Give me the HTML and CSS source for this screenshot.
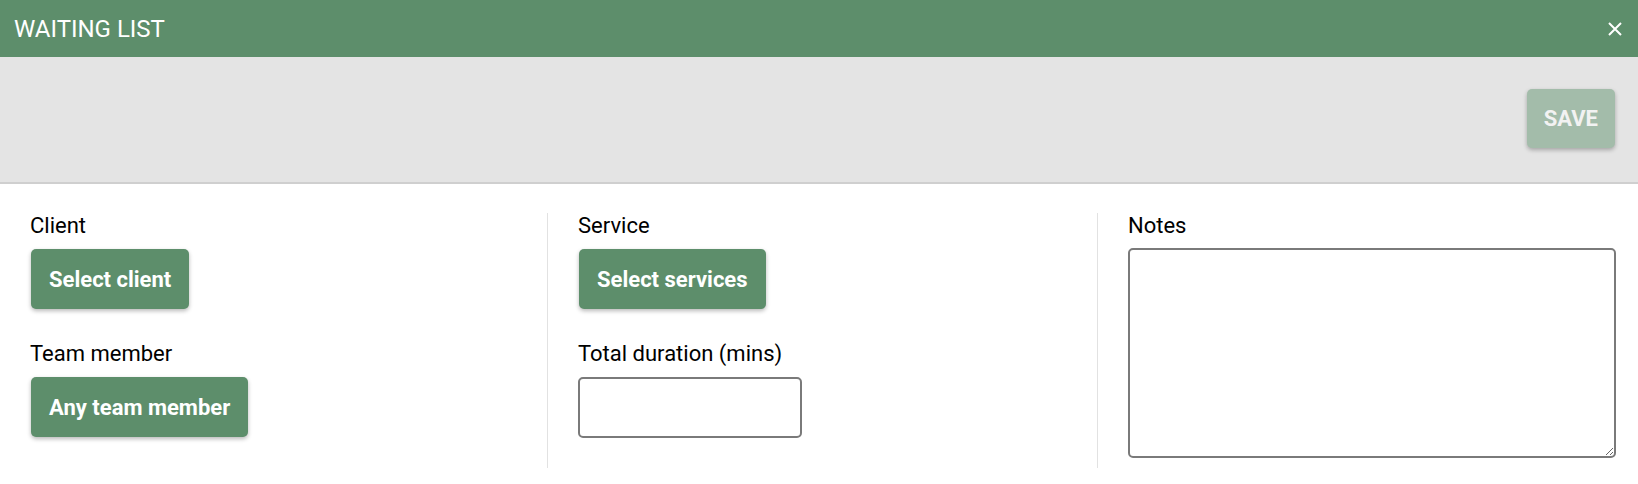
FILE: index.html
```html
<!DOCTYPE html>
<html lang="en">
<head>
<meta charset="utf-8">
<title>Waiting list</title>
<link rel="stylesheet" href="styles.css">
</head>
<body>
<div class="dialog">
  <header class="titlebar">
    <h1 class="title">WAITING LIST</h1>
    <button class="close" aria-label="Close">
      <svg width="14" height="14" viewBox="0 0 14 14"><path d="M1 1 L13 13 M13 1 L1 13" stroke="#fff" stroke-width="2" fill="none"/></svg>
    </button>
  </header>
  <div class="toolbar">
    <button class="btn btn-save" disabled>SAVE</button>
  </div>
  <main class="form">
    <section class="col">
      <div class="field">
        <label class="label">Client</label>
        <button class="btn">Select client</button>
      </div>
      <div class="field">
        <label class="label">Team member</label>
        <button class="btn">Any team member</button>
      </div>
    </section>
    <section class="col col-divided">
      <div class="field">
        <label class="label">Service</label>
        <button class="btn">Select services</button>
      </div>
      <div class="field">
        <label class="label">Total duration (mins)</label>
        <input class="input" type="text">
      </div>
    </section>
    <section class="col col-divided col-last">
      <div class="field field-notes">
        <label class="label">Notes</label>
        <textarea class="notes"></textarea>
      </div>
    </section>
  </main>
</div>
</body>
</html>
```
FILE: styles.css
```css
* { box-sizing: border-box; }
html, body { margin: 0; padding: 0; background: #fff; }
body {
  font-family: Roboto, "Liberation Sans", Arial, sans-serif;
  color: #000;
}
.titlebar {
  height: 57px;
  background: #5d8e6b;
  display: flex;
  align-items: center;
  justify-content: space-between;
  padding: 0 15px 0 14px;
}
.title {
  margin: 0;
  font-size: 24px;
  font-weight: 400;
  color: #fff;
  line-height: 1;
}
.close {
  background: none;
  border: 0;
  padding: 0;
  width: 14px;
  height: 14px;
  display: flex;
  margin-right: 1px;
}
.toolbar {
  height: 127px;
  background: #e4e4e4;
  border-bottom: 2px solid #cfcfcf;
  display: flex;
  align-items: center;
  justify-content: flex-end;
  padding: 0 23px 2px 0;
}
.btn {
  font-family: Roboto, "Liberation Sans", Arial, sans-serif;
  font-size: 22px;
  font-weight: 700;
  color: #fff;
  background: #5d8e6b;
  border: 0;
  border-radius: 5px;
  height: 60px;
  padding: 0 18px;
  box-shadow: 0 2px 4px rgba(0, 0, 0, 0.28);
  align-self: flex-start;
  margin-left: 1px;
}
.btn-save {
  background: #a3bcaa;
  color: #f2f2f2;
  height: 59px;
  padding: 0 17px;
  margin-left: 0;
  align-self: auto;
}
.form {
  display: grid;
  grid-template-columns: 547px 550px 1fr;
  padding: 29px 0 17px;
}
.col {
  display: flex;
  flex-direction: column;
  gap: 32px;
  padding: 0 0 30px 30px;
}
.col-divided { border-left: 1px solid #e2e2e2; }
.col-last { padding: 0 22px 0 30px; }
.field {
  display: flex;
  flex-direction: column;
  gap: 10px;
}
.field-notes { gap: 9px; }
.label {
  font-size: 22px;
  line-height: 26px;
}
.input {
  width: 224px;
  height: 61px;
  border: 2px solid #7a7a7a;
  border-radius: 5px;
  font-size: 22px;
  padding: 4px 8px;
}
.notes {
  width: 100%;
  height: 210px;
  border: 2px solid #7a7a7a;
  border-radius: 5px;
  font-size: 22px;
  font-family: Roboto, "Liberation Sans", Arial, sans-serif;
  padding: 4px 8px;
  display: block;
}
```
